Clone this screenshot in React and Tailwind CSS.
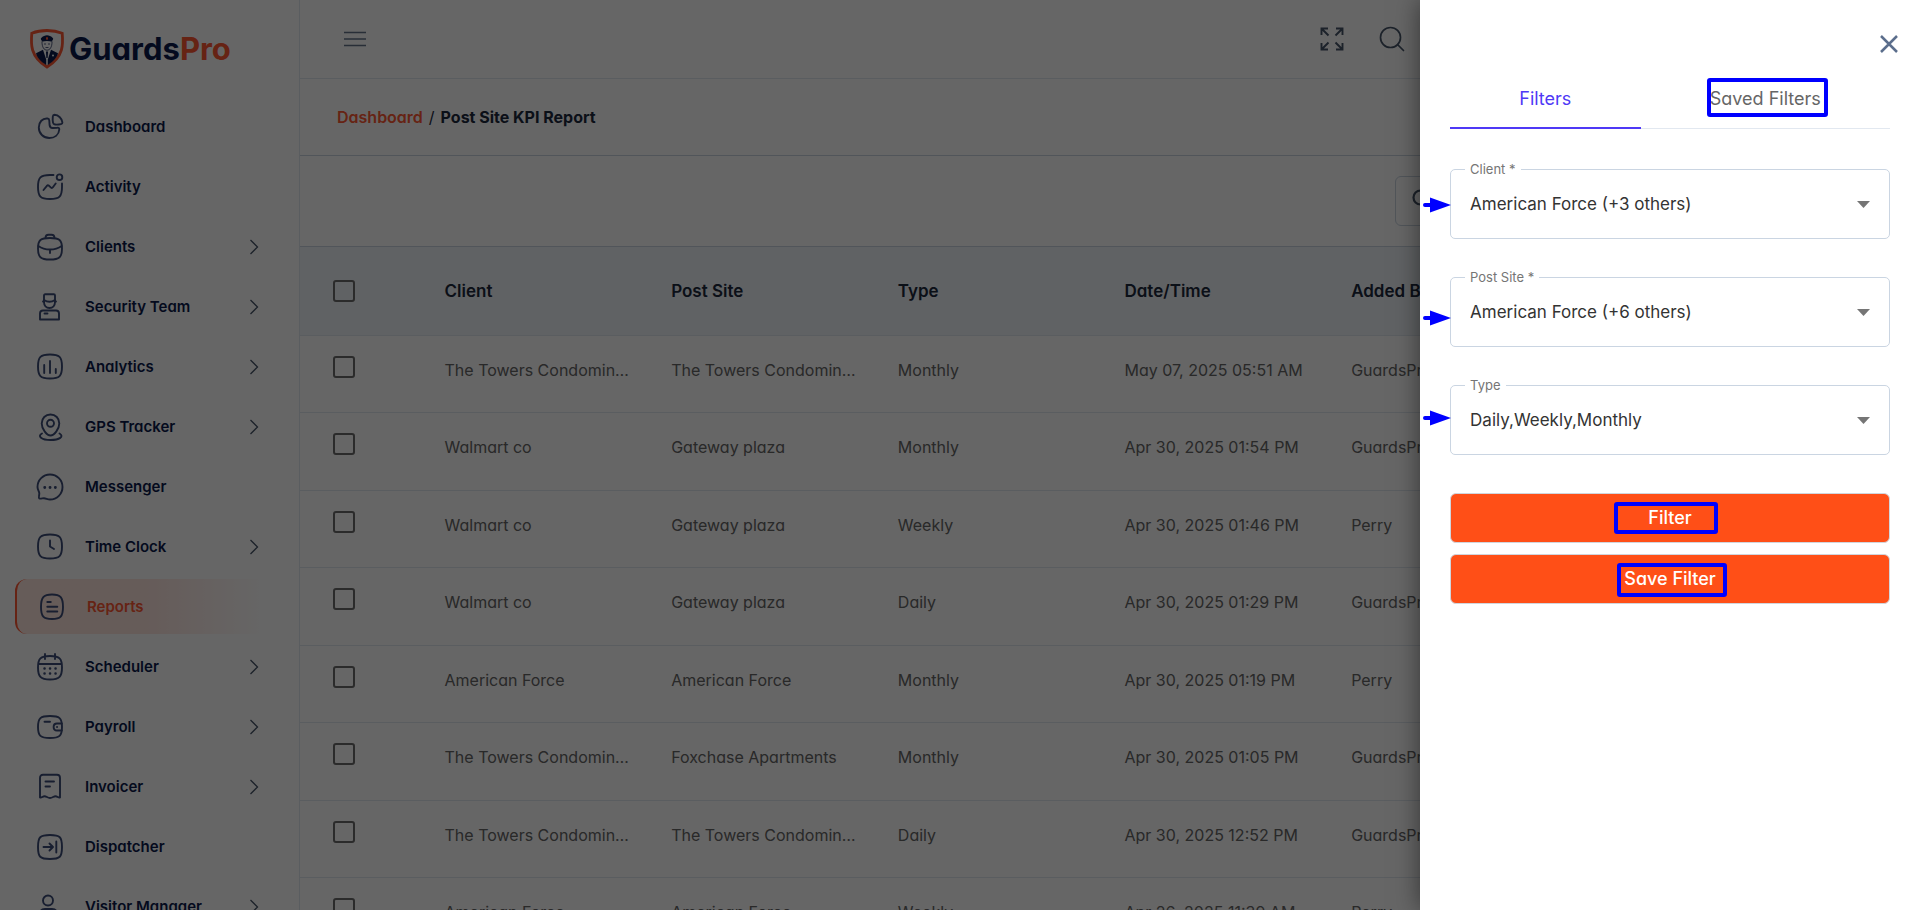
import { useState } from "react";

const cols = ["Client", "Post Site", "Type", "Date/Time", "Added By", "Status"];

const rows = [
  ["The Towers Condominium", "The Towers Condominium", "Monthly", "May 07, 2025 05:51 AM", "GuardsPro"],
  ["Walmart co", "Gateway plaza", "Monthly", "Apr 30, 2025 01:54 PM", "GuardsPro"],
  ["Walmart co", "Gateway plaza", "Weekly", "Apr 30, 2025 01:46 PM", "Perry"],
  ["Walmart co", "Gateway plaza", "Daily", "Apr 30, 2025 01:29 PM", "GuardsPro"],
  ["American Force", "American Force", "Monthly", "Apr 30, 2025 01:19 PM", "Perry"],
  ["The Towers Condominium", "Foxchase Apartments", "Monthly", "Apr 30, 2025 01:05 PM", "GuardsPro"],
  ["The Towers Condominium", "The Towers Condominium", "Daily", "Apr 30, 2025 12:52 PM", "GuardsPro"],
  ["American Force", "American Force", "Weekly", "Apr 26, 2025 11:39 AM", "Perry"],
];

const squircle = "M14 1.5c9.500 0 12 2.500 12 12s-2.500 12-12 12-12-2.500-12-12 2.500-12 12-12z";

const icons = {
  dashboard: (
    <>
      <path d="M11.500 5.500C6.500 5 2.800 9 2.800 14.500c0 6 4.700 10.500 10.500 10.500 5.200 0 9.500-3 10-8.500.1-1.500-.8-2-2-1.800l-4.500.3c-2 .1-3-.8-3.200-2.800l-.3-4.700c-.1-1.200-.6-1.900-1.800-2z" />
      <path d="M18.500 1.800c4 .2 7.500 3.700 7.900 7.500.1 1-.5 1.600-1.400 1.800-1.800.4-4 .6-6 .4-1.100-.1-1.800-.7-2-1.800-.4-2-.4-4.200-.2-6.200.1-1.100.7-1.700 1.700-1.700z" />
    </>
  ),
  activity: (
    <>
      <path d="M17.500 2H14C4.500 2 2 4.500 2 14s2.500 12 12 12 12-2.500 12-12v-3.500" />
      <circle cx="23.500" cy="4.200" r="2.800" />
      <path d="m7.500 17 3.600-4.300c.5-.6 1-.6 1.600-.1l2.300 2c.7.600 1.200.5 1.700-.1l3-4" />
    </>
  ),
  clients: (
    <>
      <path d="M14 5c9.500 0 12 2 12 10.500S23.500 26.500 14 26.500 2 24 2 15.500 4.500 5 14 5z" />
      <path d="M9.500 5c0-2.500 1-3.300 3-3.300h3c2 0 3 .8 3 3.300" />
      <path d="M2.300 13c6.500 4.700 16.900 4.700 23.400 0M14 16.500V20" />
    </>
  ),
  security: (
    <>
      <path d="M8 2.500c0-.8.400-1.200 1.200-1.200h8.600c.8 0 1.200.4 1.200 1.200V9c0 3.500-2.200 6-5.500 6S8 12.500 8 9z" />
      <path d="M8 7c3.500 2.300 7.500 2.300 11 0M7 8.500h1M19 8.500h1M8.500 20.500h3" />
      <path d="M4 26.500v-6c0-2 1-3 3-3h13c2 0 3 1 3 3v6z" />
    </>
  ),
  analytics: (
    <>
      <path d={squircle} />
      <path d="M8.200 12v8M14 8v12M19.800 16v4" />
    </>
  ),
  gps: (
    <>
      <path d="M14.500 1.500c5 0 8.800 3.700 8.800 9 0 5.500-5.300 12-8.800 12s-8.800-6.500-8.800-12c0-5.300 3.800-9 8.800-9z" />
      <circle cx="14.500" cy="10.300" r="3.500" />
      <path d="M6 20.500c-5 2.500-.5 6.500 8.500 6.500s14-3.500 9-6.500" />
    </>
  ),
  messenger: (
    <>
      <path d="M14 1.500c7 0 12.500 5.500 12.500 12.500S21 26.500 14 26.500c-2.500 0-4-1.300-6-1.300-1.700 0-3.500.8-4.700.2-1-.7 0-3.400 0-5C3.300 18.500 1.500 17 1.500 14 1.500 7 7 1.500 14 1.500z" />
      <path d="M8.700 14.500h.1M14 14.500h.1M19.300 14.500h.1" strokeWidth="2.800" />
    </>
  ),
  clock: (
    <>
      <path d={squircle} />
      <path d="M14 7.500v6l4 2.500" />
    </>
  ),
  reports: (
    <>
      <path d="M14 1.500c8.500 0 11 3 11 12.500s-2.500 12-11 12S3 23.500 3 14 5.500 1.500 14 1.500z" />
      <path d="M9.300 9h3.500M9.300 13.800h10M9.300 18.500h10" />
    </>
  ),
  scheduler: (
    <>
      <path d="M14 3c9.500 0 12 2.500 12 11.500S23.500 26.500 14 26.500 2 23.500 2 14.500 4.500 3 14 3zM3 11h22M9 1v5M19 1v5" />
      <path d="M8.500 15.500h.1M14 15.500h.1M19.500 15.500h.1M8.500 20.500h.1M14 20.500h.1M19.500 20.500h.1" strokeWidth="2.500" />
    </>
  ),
  payroll: (
    <>
      <path d="M14 3c9.500 0 12 2 12 11s-2.500 11-12 11S2 23 2 14 4.500 3 14 3z" />
      <path d="M25.800 10.500H21c-4.500 0-4.500 7 0 7h4.800M8.500 8.800h5.500M21 14h.1" />
    </>
  ),
  invoicer: (
    <>
      <path d="M4 24.500V5c0-2 1-3.200 3-3.200h14c2 0 3 1.200 3 3.200v19.500c-1.500.8-2.600-1.300-4.500-1.300-2 0-3 1.800-5.500 1.800s-3.500-1.800-5.500-1.800c-1.900 0-3 2.100-4.500 1.300z" />
      <path d="M9.500 8.500h8.500M9.500 13.500H14" />
    </>
  ),
  dispatcher: (
    <>
      <path d="M14 2c10 0 12 2 12 12s-2 12-12 12S2 24 2 14 4 2 14 2z" />
      <path d="M7.500 14h9M13.500 10.500 17 14l-3.500 3.500M20.300 8.500v11" />
    </>
  ),
  visitor: (
    <>
      <circle cx="12" cy="7.500" r="5" />
      <path d="M4 26v-5c0-3 2-5 5-5h7c3 0 5 2 5 5v5z" />
    </>
  ),
};

const nav = [
  { label: "Dashboard", icon: "dashboard" },
  { label: "Activity", icon: "activity" },
  { label: "Clients", icon: "clients", more: true },
  { label: "Security Team", icon: "security", more: true },
  { label: "Analytics", icon: "analytics", more: true },
  { label: "GPS Tracker", icon: "gps", more: true },
  { label: "Messenger", icon: "messenger" },
  { label: "Time Clock", icon: "clock", more: true },
  { label: "Reports", icon: "reports", active: true },
  { label: "Scheduler", icon: "scheduler", more: true },
  { label: "Payroll", icon: "payroll", more: true },
  { label: "Invoicer", icon: "invoicer", more: true },
  { label: "Dispatcher", icon: "dispatcher" },
  { label: "Visitor Manager", icon: "visitor", more: true },
];

function Logo() {
  return (
    <a href="#home" className="flex items-center gap-1 pl-[29px]">
      <svg width="36" height="40" viewBox="0 0 36 40" fill="none">
        <path d="M18 1.500c5.500 0 10.500.8 15.200 2.700.9 10.300 2 23.300-15.200 33.800C.8 27.500 1.900 14.500 2.800 4.200 7.500 2.300 12.500 1.500 18 1.500z" stroke="#ff5733" strokeWidth="2.800" />
        <path d="M12 9.200c2-2.200 4-3 6-3s4 .8 6 3c.5.800-.3 1.600-.7 2.300v1.300c-3.500-1-7.100-1-10.600 0v-1.300c-.4-.7-1.200-1.500-.7-2.300z" fill="#0b1b4d" />
        <path d="M17 8.200h2v2l-1 .8-1-.8z" fill="#ff5733" />
        <path d="M13 13c0 5 2 8.200 5 8.200s5-3.200 5-8.200M15 15h2M19 15h2M16.500 18.500h3" stroke="#0b1b4d" strokeWidth=".7" />
        <path d="M14 20.800 7 24.200c.8 4 4.500 8 10.200 11.800v-5.500zM22 20.800l7 3.400c-.8 4-4.500 8-10.200 11.800v-5.500z" fill="#0b1b4d" />
        <path d="m17 23 1-1 1 1-.4 6h-1.200z" fill="#0b1b4d" />
        <circle cx="24" cy="26.500" r="1" fill="#fff" />
      </svg>
      <span className="text-[31px] leading-10 font-bold text-[#0b1b4d]">
        Guards<span className="text-[#ff5733]">Pro</span>
      </span>
    </a>
  );
}

function Sidebar() {
  return (
    <aside className="w-[300px] shrink-0 overflow-hidden border-r border-slate-200 bg-white">
      <div className="flex h-[99px] items-center pb-[2px]">
        <Logo />
      </div>
      <nav className="flex flex-col gap-[5px] pl-[15px] pr-[22px]">
        {nav.map((item) => (
          <a
            key={item.label}
            href={`#${item.icon}`}
            className={`flex h-[55px] shrink-0 items-center text-[15px] font-semibold ${
              item.active
                ? "rounded-l-xl border-l-2 border-[#ff5733] bg-linear-to-r from-[#ffe5df] from-50% to-white to-95% pl-[21px] text-[#ff5733]"
                : "pl-[21px] text-[#0b1b4d]"
            }`}
          >
            <svg width="28" height="28" viewBox="0 0 28 28" fill="none" stroke="#3c4d78" strokeWidth="1.900" strokeLinecap="round" strokeLinejoin="round">
              {icons[item.icon]}
            </svg>
            <span className="pt-0.5 pl-[21px]">{item.label}</span>
            {item.more ? (
              <svg className="mr-[18px] ml-auto" width="10" height="16" viewBox="0 0 10 16" fill="none" stroke="#475569" strokeWidth="1.300">
                <path d="m1.500 1 7 7-7 7" />
              </svg>
            ) : null}
          </a>
        ))}
      </nav>
    </aside>
  );
}

function Topbar() {
  return (
    <header className="flex h-[79px] shrink-0 items-center border-b border-slate-200 pr-[514px] pl-[43px]">
      <button type="button" aria-label="Toggle menu">
        <svg width="24" height="24" viewBox="0 0 24 24" stroke="#64748b" strokeWidth="1.500">
          <path d="M1 5.500h22M1 12h22M1 18.500h22" />
        </svg>
      </button>
      <div className="ml-auto flex gap-[35px]">
        <button type="button" aria-label="Fullscreen">
          <svg width="24" height="24" viewBox="0 0 24 24" fill="none" stroke="#475569" strokeWidth="1.900">
            <path d="M1.500 8V1.500H8M1.500 1.500l7 7M16 1.500h6.500V8M22.500 1.500l-7 7M1.500 16v6.500H8M1.500 22.500l7-7M16 22.500h6.500V16M22.500 22.500l-7-7" />
          </svg>
        </button>
        <button type="button" aria-label="Search">
          <svg width="26" height="26" viewBox="0 0 26 26" fill="none" stroke="#475569" strokeWidth="1.700" strokeLinecap="round">
            <circle cx="11.500" cy="11.500" r="10" />
            <path d="m18.500 18.500 6 6" />
          </svg>
        </button>
      </div>
    </header>
  );
}

const box = "block size-[22px] appearance-none rounded-[3px] border-2 border-[#6b6b6b]";

function ReportTable() {
  return (
    <table className="w-full table-fixed text-left">
      <colgroup>
        <col className="w-[8%]" />
        {cols.map((c) => (
          <col key={c} className="w-[14%]" />
        ))}
        <col className="w-[8%]" />
      </colgroup>
      <thead>
        <tr className="h-[88px] border-b border-slate-200 bg-slate-100">
          <th className="pl-[33px]">
            <input type="checkbox" aria-label="Select all" className={box} />
          </th>
          {cols.map((c) => (
            <th key={c} className="pt-0.5 pl-[15px] text-[17px] font-semibold text-slate-800">
              {c}
            </th>
          ))}
          <th />
        </tr>
      </thead>
      <tbody>
        {rows.map((row, i) => (
          <tr key={i} className="h-[78px] border-b border-slate-200 odd:h-[77px]">
            <td className="pb-3.5 pl-[33px]">
              <input type="checkbox" aria-label={`Select row ${i + 1}`} className={box} />
            </td>
            {row.map((cell, j) => (
              <td key={j} className="truncate pr-[26px] pb-2 pl-[15px] text-base text-[#666]">
                {cell}
              </td>
            ))}
            <td />
            <td />
          </tr>
        ))}
      </tbody>
    </table>
  );
}

function Field({ id, label, value }) {
  return (
    <div className="relative [font-feature-settings:normal]">
      <label htmlFor={id} className="absolute -top-2.5 left-[15px] bg-white px-[5px] text-[13px] leading-5 text-[#757575]">
        {label}
      </label>
      <select id={id} className="block h-[70px] w-full appearance-none rounded-[5px] border border-slate-300 bg-transparent px-[19px] pt-0.5 text-[17px] text-[#333]">
        <option>{value}</option>
      </select>
      <svg className="pointer-events-none absolute top-8 right-5" width="13" height="7" viewBox="0 0 13 7" fill="#757575">
        <path d="M0 0h13L6.500 7z" />
      </svg>
    </div>
  );
}

// callout pointers on the left edge of the drawer
function Pointer({ className }) {
  return (
    <svg className={`absolute ${className}`} width="28" height="16" viewBox="0 0 28 16" fill="#00f">
      <path d="M2 6h5V.500L28 8 7 15.500V10H2a2 2 0 0 1 0-4z" />
    </svg>
  );
}

const mark = "pointer-events-none absolute rounded-[3px] border-4 border-[#00f]";

function FilterDrawer() {
  const [tab, setTab] = useState("Filters");
  return (
    <aside className="absolute inset-y-0 right-0 w-[26%] bg-white pr-[29px] pl-[30px] shadow-[0_0_24px_rgba(0,0,0,0.5)]">
      <div className="-mr-[9px] flex justify-end pt-[34px]">
        <button type="button" aria-label="Close">
          <svg width="20" height="20" viewBox="0 0 20 20" stroke="#5b6e8c" strokeWidth="2.500">
            <path d="m2 2 16 16M18 2 2 18" />
          </svg>
        </button>
      </div>
      <div role="tablist" className="mt-3.5 flex border-b border-slate-200">
        {["Filters", "Saved Filters"].map((name) => (
          <button
            key={name}
            type="button"
            role="tab"
            aria-selected={tab === name}
            onClick={() => setTab(name)}
            className={`relative -mb-px h-[61px] grow border-b-2 pt-0.5 text-[18px] ${
              tab === name ? "border-indigo-600 text-indigo-600" : "border-transparent text-[#666]"
            }`}
          >
            {name}
            {name === "Saved Filters" ? <span className={`${mark} top-2.5 right-[62px] left-[66px] h-[39px]`} /> : null}
          </button>
        ))}
      </div>
      <form className="mt-10" onSubmit={(e) => e.preventDefault()}>
        <div className="flex flex-col gap-[38px]">
          <Field id="client" label="Client *" value="American Force (+3 others)" />
          <Field id="site" label="Post Site *" value="American Force (+6 others)" />
          <Field id="type" label="Type" value="Daily,Weekly,Monthly" />
        </div>
        <div className="mt-[38px] flex flex-col gap-[11px]">
          <button type="submit" className="relative h-[50px] rounded-md border border-gray-300 bg-[#ff4f17] pb-0.5 text-[18px] font-medium text-white">
            Filter
            <span className={`${mark} top-2 left-[163px] h-8 w-[104px]`} />
          </button>
          <button type="button" className="relative h-[50px] rounded-md border border-gray-300 bg-[#ff4f17] pb-0.5 text-[18px] font-medium text-white">
            Save Filter
            <span className={`${mark} top-2 left-[166px] h-[34px] w-[110px]`} />
          </button>
        </div>
      </form>
      <Pointer className="top-[197px] left-[3px]" />
      <Pointer className="top-[310px] left-[3px]" />
      <Pointer className="top-[410px] left-[3px]" />
    </aside>
  );
}

export default function App() {
  return (
    <div className="relative flex h-screen overflow-hidden bg-white font-['Inter','Liberation_Sans',sans-serif] [font-feature-settings:'cv11']">
      <Sidebar />
      <main className="flex min-w-0 flex-1 flex-col">
        <Topbar />
        <div className="flex h-[77px] shrink-0 items-center gap-1.5 border-b border-slate-300 pl-[37px] text-base font-semibold text-slate-800">
          <a href="#dashboard" className="text-[#ff5733]">
            Dashboard
          </a>
          <span className="font-normal">/</span>
          <span className="font-bold">Post Site KPI Report</span>
        </div>
        <div className="flex h-[91px] shrink-0 items-center justify-end border-b border-slate-300 pr-6">
          <label className="flex h-[50px] w-[500px] items-center gap-3 rounded-md border border-slate-300 px-4 pb-1">
            <svg width="20" height="20" viewBox="0 0 20 20" fill="none" stroke="#475569" strokeWidth="2.200">
              <circle cx="8.500" cy="8.500" r="7" />
              <path d="m13.500 13.500 5 5" />
            </svg>
            <input type="search" aria-label="Search reports" className="min-w-0 flex-1 outline-none" />
          </label>
        </div>
        <ReportTable />
      </main>
      <div className="absolute inset-0 bg-black/60" />
      <FilterDrawer />
    </div>
  );
}
